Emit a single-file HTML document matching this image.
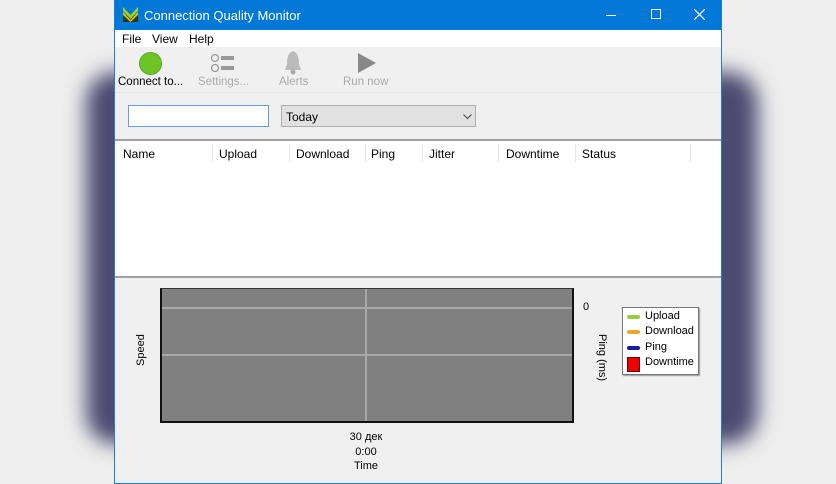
<!DOCTYPE html>
<html><head><meta charset="utf-8"><style>
*{margin:0;padding:0;box-sizing:border-box}
body{width:836px;height:484px;overflow:hidden;background:#eeeeee;font-family:"Liberation Sans",sans-serif;font-size:12px;color:#000;position:relative}
.blob{position:absolute;left:86px;top:72px;width:672px;height:372px;background:#4b4a70;border-radius:30px;filter:blur(10px)}
.win{position:absolute;left:114px;top:0;width:608px;height:484px;background:#f0f0f0;border:1px solid #1a7fd4;border-top:none}
.title{height:30px;background:#0078d7;color:#fff;font-size:13px;position:relative}
.title span{position:absolute;left:29px;top:8px}
.menu{height:17px;background:#fff;position:relative}
.menu span{position:absolute;top:2px}
.tb{height:46px;background:#f0f0f0;position:relative;border-bottom:1px solid #e6e6e6}
.tb .l{position:absolute;top:29px;font-size:11.5px}
.abs{position:absolute}
.hdr span{position:absolute;top:6px}
.hdr i{position:absolute;top:3px;width:1px;height:18px;background:#e5e5e5}
</style></head><body>
<div class="blob"></div>
<div class="win">
 <div class="title">
  <svg class="abs" style="left:7px;top:6px" width="17" height="17" viewBox="0 0 17 17"><rect x="1" y="9" width="15" height="7" fill="#1d3a1d"/><path d="M1 1 L8.5 9 L16 1 L16 5 L8.5 13 L1 5Z" fill="#9bd22a"/><path d="M1 6 L8.5 14 L16 6 L16 9 L8.5 16 L1 9Z" fill="#e6c000"/></svg>
  <span>Connection Quality Monitor</span>
  <div class="abs" style="left:491px;top:15px;width:10px;height:1px;background:#fff"></div>
  <div class="abs" style="left:536px;top:9px;width:10px;height:10px;border:1px solid #fff"></div>
  <svg class="abs" style="left:579px;top:9px" width="11" height="11"><path d="M0 0L11 11M11 0L0 11" stroke="#fff" stroke-width="1.2"/></svg>
 </div>
 <div class="menu"><span style="left:7px">File</span><span style="left:37px">View</span><span style="left:74px">Help</span></div>
 <div class="tb">
  <div class="abs" style="left:24px;top:5px;width:23px;height:23px;border-radius:50%;background:#6cc426;border:1px solid #5aa81e"></div>
  <span class="l" style="left:3px">Connect to...</span>
  <svg class="abs" style="left:95px;top:6px" width="26" height="20"><circle cx="5" cy="5" r="3.5" fill="none" stroke="#999" stroke-width="1.3"/><circle cx="5" cy="15" r="3.5" fill="none" stroke="#999" stroke-width="1.3"/><rect x="11" y="3" width="13" height="4" fill="#999"/><rect x="11" y="13" width="13" height="4" fill="#999"/></svg>
  <span class="l" style="left:83px;color:#aaa">Settings...</span>
  <svg class="abs" style="left:167px;top:3px" width="22" height="26"><path d="M11 1 C6 3 5 8 5 14 L3 20 L19 20 L17 14 C17 8 16 3 11 1Z" fill="#bbb"/><circle cx="11" cy="22" r="2.5" fill="#aaa"/></svg>
  <span class="l" style="left:164px;color:#aaa">Alerts</span>
  <svg class="abs" style="left:242px;top:5px" width="20" height="22"><path d="M1 1 L19 11 L1 21Z" fill="#888"/></svg>
  <span class="l" style="left:228px;color:#aaa">Run now</span>
 </div>
 <div class="abs" style="left:13px;top:105px;width:141px;height:22px;background:#fff;border:1px solid #6a9bd0"></div>
 <div class="abs" style="left:166px;top:105px;width:195px;height:22px;background:#e1e1e1;border:1px solid #adadad;padding:4px 4px">Today
  <svg class="abs" style="left:181px;top:8px" width="9" height="6"><path d="M0.5 0.5L4.5 4.5L8.5 0.5" fill="none" stroke="#444"/></svg></div>
 <div class="abs hdr" style="left:0;top:139px;width:606px;height:139px;background:#fff;border-top:2px solid #a0a0a0;border-bottom:2px solid #a0a0a0">
  <span style="left:8px">Name</span><i style="left:97px"></i>
  <span style="left:104px">Upload</span><i style="left:174px"></i>
  <span style="left:181px">Download</span><i style="left:250px"></i>
  <span style="left:256px">Ping</span><i style="left:307px"></i>
  <span style="left:314px">Jitter</span><i style="left:383px"></i>
  <span style="left:391px">Downtime</span><i style="left:460px"></i>
  <span style="left:467px">Status</span><i style="left:575px"></i>
 </div>
 <div class="abs" style="left:45px;top:288px;width:414px;height:135px;background:#808080;border:2px solid #111;border-top:1px solid #333"></div>
 <div class="abs" style="left:47px;top:307px;width:410px;height:2px;background:#a8a8a8"></div>
 <div class="abs" style="left:47px;top:354px;width:410px;height:2px;background:#a8a8a8"></div>
 <div class="abs" style="left:250px;top:289px;width:2px;height:132px;background:#a8a8a8"></div>
 <div class="abs" style="left:20px;top:366px;transform:rotate(-90deg);transform-origin:left top;font-size:11px">Speed</div>
 <div class="abs" style="left:468px;top:301px;font-size:11px">0</div>
 <div class="abs" style="left:493px;top:334px;transform:rotate(90deg);transform-origin:left top;font-size:11px;white-space:nowrap">Ping (ms)</div>
 <div class="abs" style="left:221px;top:430px;font-size:11px;text-align:center;width:60px;line-height:14.5px;white-space:nowrap">30 дек<br>0:00<br>Time</div>
 <div class="abs" style="left:507px;top:307px;width:77px;height:68px;background:#fff;border:1px solid #777;box-shadow:1px 1px 1px #999;font-size:11px">
  <div class="abs" style="left:4px;top:7px;width:13px;height:4px;border-radius:2px;background:#9c4"></div><span class="abs" style="left:22px;top:2px">Upload</span>
  <div class="abs" style="left:4px;top:22px;width:13px;height:4px;border-radius:2px;background:#e9a830"></div><span class="abs" style="left:22px;top:17px">Download</span>
  <div class="abs" style="left:4px;top:38px;width:13px;height:4px;border-radius:2px;background:#1a1aa0"></div><span class="abs" style="left:22px;top:33px">Ping</span>
  <div class="abs" style="left:4px;top:49px;width:13px;height:15px;background:#e00;border:1px solid #600"></div><span class="abs" style="left:22px;top:48px">Downtime</span>
 </div>
</div>
</body></html>
